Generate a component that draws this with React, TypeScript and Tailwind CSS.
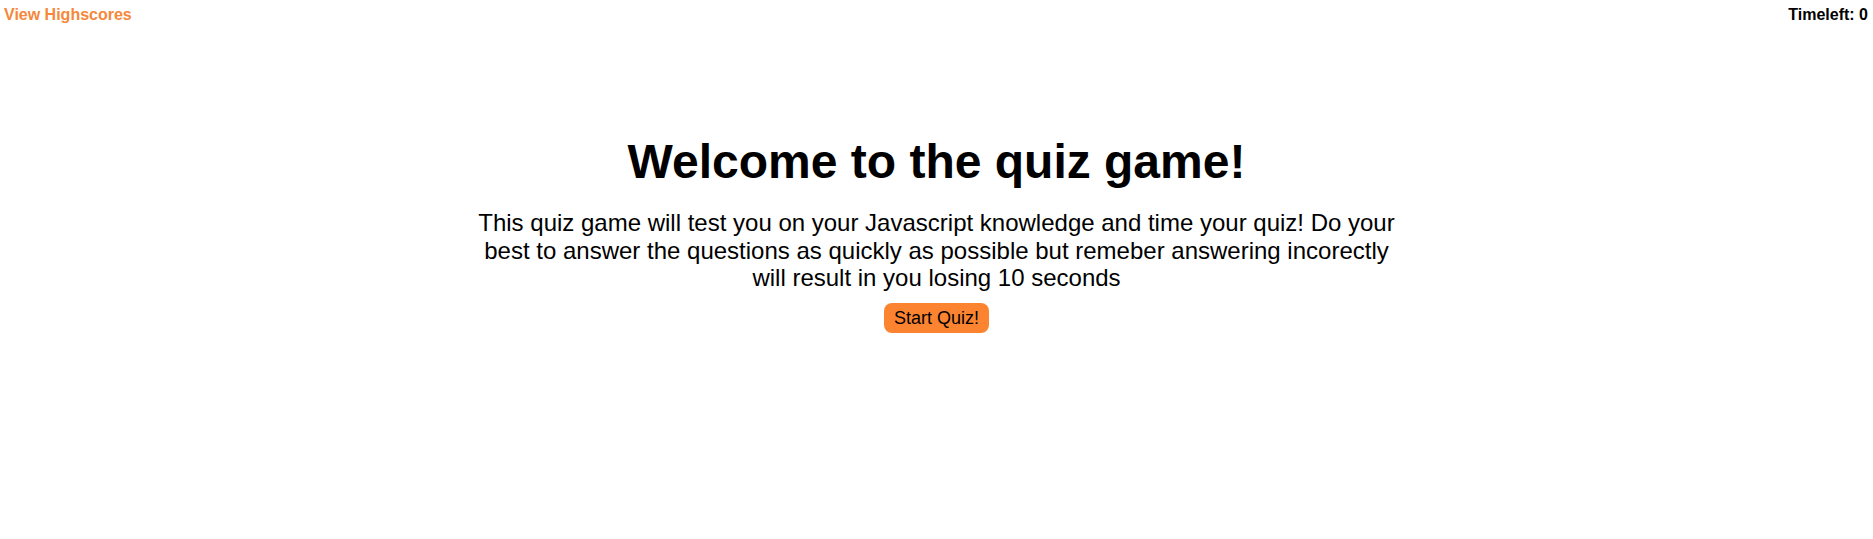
import React from "react";

export default function App() {
  return (
    <div className="min-h-[539px] bg-white text-black" style={{ fontFamily: '"Liberation Sans", Arial, sans-serif' }}>
      <header className="flex justify-between px-[4px] pt-[6px] text-[16px] font-bold leading-[18px]">
        <a className="text-[#f5883a] cursor-pointer">View Highscores</a>
        <div className="pr-[1px]">Timeleft: 0</div>
      </header>
      <main className="flex flex-col items-center pt-[110px]">
        <h1 className="text-[48px] font-bold leading-[55px]">Welcome to the quiz game!</h1>
        <p className="mt-[20px] w-[936px] text-center text-[24px] leading-[27.6px]">
          This quiz game will test you on your Javascript knowledge and time your quiz! Do your best to answer the questions as quickly as possible but remeber answering incorectly will result in you losing 10 seconds
        </p>
        <button className="mt-[11px] h-[30px] w-[105px] rounded-[8px] bg-[#fc8430] text-[18px] leading-[20px] text-black">
          Start Quiz!
        </button>
      </main>
    </div>
  );
}
